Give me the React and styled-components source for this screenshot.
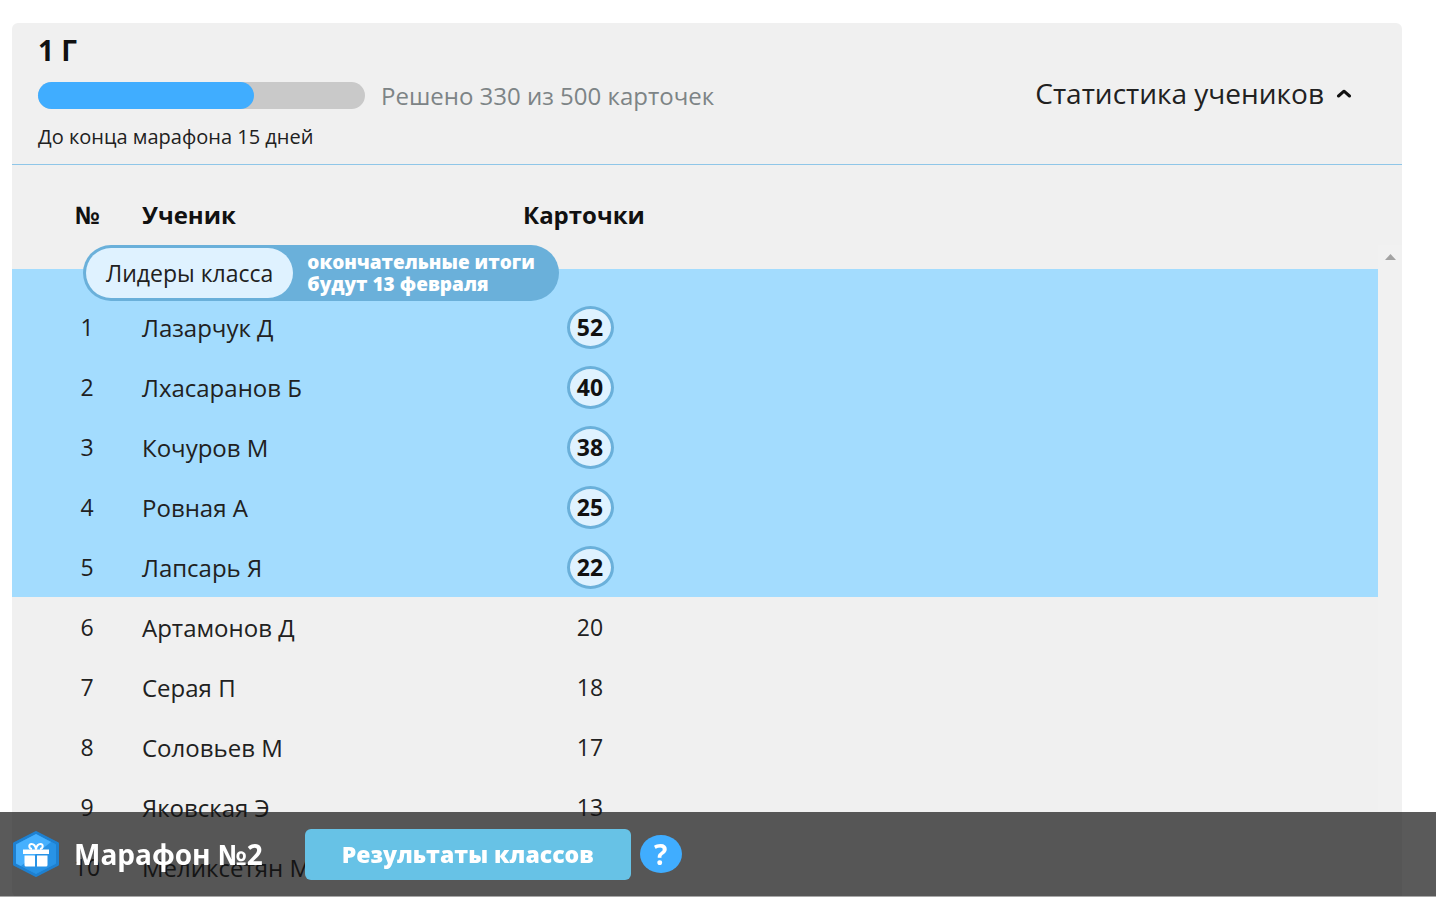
import styled, { createGlobalStyle } from "styled-components";

const leaders = [
  { name: "Лазарчук Д", cards: 52 },
  { name: "Лхасаранов Б", cards: 40 },
  { name: "Кочуров М", cards: 38 },
  { name: "Ровная А", cards: 25 },
  { name: "Лапсарь Я", cards: 22 },
];

const others = [
  { name: "Артамонов Д", cards: 20 },
  { name: "Серая П", cards: 18 },
  { name: "Соловьев М", cards: 17 },
  { name: "Яковская Э", cards: 13 },
  { name: "Меликсетян М" },
];

const solved = 330;
const total = 500;

export default function App() {
  return (
    <>
      <GlobalStyle />
      <ClassCard>
        <CardHeader>
          <div>
            <ClassName>1 Г</ClassName>
            <ProgressRow>
              <Track
                role="progressbar"
                aria-labelledby="solved"
                aria-valuenow={solved}
                aria-valuemax={total}
              >
                <Fill style={{ width: `${(solved / total) * 100}%` }} />
              </Track>
              <Solved id="solved">
                Решено {solved} из {total} карточек
              </Solved>
            </ProgressRow>
            <Deadline>До конца марафона 15 дней</Deadline>
          </div>
          <StatsToggle type="button" aria-expanded="true">
            Статистика учеников
            <ChevronUp />
          </StatsToggle>
        </CardHeader>

        <Stats>
          <Students>
            <colgroup>
              <NumberCol />
              <NameCol />
              <CardsCol />
              <col />
            </colgroup>
            <thead>
              <tr>
                <HeadCell $center>№</HeadCell>
                <HeadCell>Ученик</HeadCell>
                <HeadCell>Карточки</HeadCell>
                <HeadCell as="td" />
              </tr>
            </thead>
            <Leaders>
              <tr>
                <BadgeCell colSpan={4}>
                  <LeadersBadge>
                    <BadgeTitle>Лидеры класса</BadgeTitle>
                    <BadgeNote>
                      окончательные итоги
                      <br />
                      будут 13 февраля
                    </BadgeNote>
                  </LeadersBadge>
                </BadgeCell>
              </tr>
              {leaders.map((student, i) => (
                <tr key={student.name}>
                  <NumberCell>{i + 1}</NumberCell>
                  <NameCell>{student.name}</NameCell>
                  <Cell>
                    <Score>{student.cards}</Score>
                  </Cell>
                  <Cell />
                </tr>
              ))}
            </Leaders>
            <tbody>
              {others.map((student, i) => (
                <tr key={student.name}>
                  <NumberCell>{leaders.length + i + 1}</NumberCell>
                  <NameCell>{student.name}</NameCell>
                  <Cell>{student.cards}</Cell>
                  <Cell />
                </tr>
              ))}
            </tbody>
          </Students>
          <ScrollTrack>
            <svg width="11" height="6" viewBox="0 0 11 6">
              <path d="M5.5 0 11 6H0z" fill="#a2a2a2" />
            </svg>
          </ScrollTrack>
        </Stats>
      </ClassCard>

      <BottomBar>
        <GiftIcon />
        <MarathonTitle>Марафон №2</MarathonTitle>
        <ResultsButton type="button">Результаты классов</ResultsButton>
        <HelpButton type="button">?</HelpButton>
      </BottomBar>
    </>
  );
}

function ChevronUp() {
  return (
    <svg width="16" height="10" viewBox="0 0 16 10" aria-hidden="true">
      <path
        d="M2.500 8 8 3.200 13.500 8"
        fill="none"
        stroke="#111"
        strokeWidth="3"
        strokeLinecap="round"
        strokeLinejoin="round"
      />
    </svg>
  );
}

function GiftIcon() {
  return (
    <svg width="48" height="48" viewBox="0 0 48 48" aria-hidden="true">
      <path
        d="M24 2.500 45.500 13.500v21L24 45.500 2.500 34.500v-21z"
        fill="#1e80d0"
        stroke="#1e80d0"
        strokeWidth="3"
        strokeLinejoin="round"
      />
      <path
        d="M24 4.500 43.500 14.500v19L24 43.500 4.500 33.500v-19z"
        fill="#2893e6"
        stroke="#2893e6"
        strokeLinejoin="round"
      />
      <path d="M24 4 39 12 9 36 4 33.500v-19z" fill="#46b0fe" />
      <g fill="#fff">
        <path d="M11 19.500h26v4.500H11z" />
        <path d="M12.500 25.500h10.500V36.500H14a1.500 1.500 0 0 1-1.500-1.500zM25 25.500h10.500V35a1.500 1.500 0 0 1-1.500 1.500h-9z" />
      </g>
      <path
        d="M24 19.500c-.5-3.500-2.500-5.500-4.500-5.500-3 0-3 4.500.5 5M24 19.500c.5-3.500 2.500-5.500 4.500-5.500 3 0 3 4.500-.5 5"
        fill="none"
        stroke="#fff"
        strokeWidth="2"
      />
    </svg>
  );
}

const GlobalStyle = createGlobalStyle`
  * {
    box-sizing: border-box;
  }

  body {
    margin: 0;
    background-color: #fff;
    color: #212121;
    font-family: "Open Sans", "Noto Sans", sans-serif;
    font-size: 24px;
    overflow: hidden;
  }

  button {
    border: none;
    padding: 0;
    font-family: inherit;
    cursor: pointer;
  }
`;

const ClassCard = styled.section`
  margin: 23px 34px 0 12px;
  border-radius: 6px;
  background-color: #f0f0f0;
`;

const CardHeader = styled.header`
  display: flex;
  justify-content: space-between;
  align-items: center;
  padding: 11px 50px 13px 26px;
  border-bottom: 1px solid #8fc6e8;
`;

const ClassName = styled.h2`
  margin: 0;
  font-size: 28px;
  line-height: 32px;
  color: #111;
`;

const ProgressRow = styled.div`
  display: flex;
  align-items: center;
  gap: 16px;
  margin-top: 16px;
`;

const Track = styled.div`
  width: 327px;
  height: 27px;
  border-radius: 14px;
  background-color: #c9c9c9;
`;

const Fill = styled.div`
  height: 100%;
  border-radius: 14px;
  background-color: #40adff;
`;

const Solved = styled.span`
  line-height: 27px;
  color: #7d8486;
`;

const Deadline = styled.p`
  margin: 14px 0 0;
  font-size: 20px;
  line-height: 28px;
`;

const StatsToggle = styled.button`
  display: flex;
  align-items: center;
  gap: 12px;
  background: none;
  font-size: 28px;
  line-height: 32px;
  color: #212121;
`;

const Stats = styled.div`
  display: flex;
`;

const Students = styled.table`
  flex: 1;
  table-layout: fixed;
  border-collapse: separate;
  border-spacing: 0;
`;

const NumberCol = styled.col`
  width: 130px;
`;

const NameCol = styled.col`
  width: 381px;
`;

const CardsCol = styled.col`
  width: 134px;
`;

const HeadCell = styled.th`
  height: 104px;
  padding: ${({ $center }) => ($center ? "35px 0 0 20px" : "35px 0 0")};
  vertical-align: top;
  text-align: ${({ $center }) => ($center ? "center" : "left")};
  line-height: 30px;
  color: #111;
`;

const Leaders = styled.tbody`
  background-color: #a3dcfe;
`;

const Cell = styled.td`
  height: 60px;
  padding: 0;
  text-align: center;
  font-size: 23px;
`;

const NumberCell = styled(Cell)`
  padding-left: 20px;
`;

const NameCell = styled(Cell)`
  text-align: left;
  font-size: 24px;
`;

const BadgeCell = styled.td`
  position: relative;
  height: 28px;
  padding: 0;
`;

/* sits across the top edge of the leaders block */
const LeadersBadge = styled.div`
  position: absolute;
  top: -24px;
  left: 71px;
  display: flex;
  align-items: center;
  height: 56px;
  padding: 3px 24px 3px 3px;
  border-radius: 28px;
  background-color: #6ab0da;
  white-space: nowrap;
`;

const BadgeTitle = styled.span`
  height: 50px;
  padding: 0 20px;
  border-radius: 25px;
  background-color: #dff2ff;
  font-size: 23px;
  line-height: 50px;
`;

const BadgeNote = styled.span`
  margin-left: 14px;
  font-size: 19px;
  font-weight: 800;
  line-height: 22px;
  color: #fff;
`;

const Score = styled.span`
  display: inline-block;
  width: 47px;
  height: 43px;
  border: 3px solid #6ab0da;
  border-radius: 50%;
  background-color: #dff2ff;
  font-weight: bold;
  line-height: 37px;
  color: #111;
  vertical-align: middle;
`;

const ScrollTrack = styled.div`
  display: flex;
  justify-content: center;
  align-items: flex-start;
  width: 24px;
  margin-top: 80px;
  padding-top: 9px;
  background-color: #f1f1f1;
`;

const BottomBar = styled.footer`
  position: fixed;
  right: 0;
  bottom: 4px;
  left: 0;
  display: flex;
  align-items: center;
  height: 85px;
  padding-left: 12px;
  border-bottom: 1px solid #a8a8a8;
  background-color: rgba(16, 16, 16, 0.69);
`;

const MarathonTitle = styled.h1`
  margin: 0 42px 0 14px;
  font-size: 28px;
  line-height: 36px;
  color: #fff;
`;

const ResultsButton = styled.button`
  width: 326px;
  height: 51px;
  border-radius: 6px;
  background-color: #67c2e6;
  font-size: 23px;
  font-weight: 800;
  color: #fff;
`;

const HelpButton = styled.button`
  width: 42px;
  height: 38px;
  margin-left: 9px;
  border-radius: 50%;
  background-color: #40adff;
  font-size: 28px;
  font-weight: bold;
  line-height: 38px;
  color: #fff;
`;
